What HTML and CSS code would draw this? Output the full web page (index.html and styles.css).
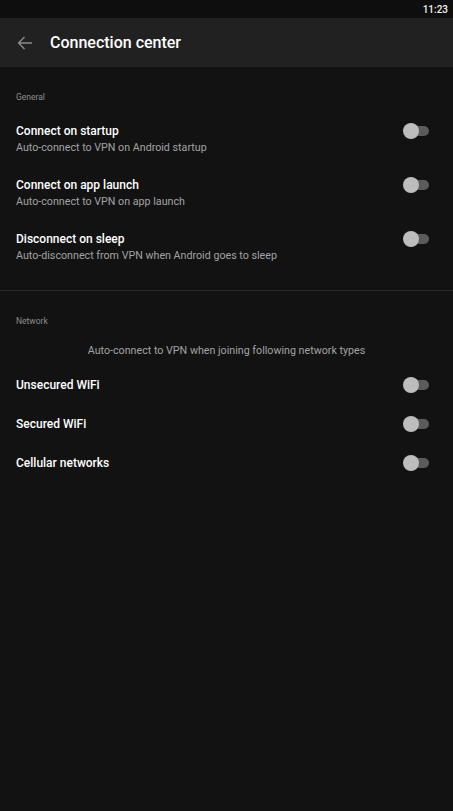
FILE: index.html
```html
<!DOCTYPE html>
<html lang="en">
<head>
  <meta charset="UTF-8" />
  <meta name="viewport" content="width=device-width, initial-scale=1" />
  <title>Connection center</title>
  <link rel="stylesheet" href="styles.css">
</head>
<body>

  <div class="status-bar">
    <span class="clock">11:23</span>
  </div>

  <header class="toolbar">
    <svg class="back" width="16" height="16" viewBox="0 0 16 16">
      <path d="M15 8H1.5M7.5 2L1.5 8l6 6" fill="none" stroke="#8a8a8a" stroke-width="1.4"/>
    </svg>
    <h1>Connection center</h1>
  </header>

  <main>
    <section class="group group-general">
      <h2 class="group-title">General</h2>

      <div class="row">
        <div class="row-text">
          <div class="row-title">Connect on startup</div>
          <div class="row-sub">Auto-connect to VPN on Android startup</div>
        </div>
        <span class="switch"></span>
      </div>

      <div class="row">
        <div class="row-text">
          <div class="row-title">Connect on app launch</div>
          <div class="row-sub">Auto-connect to VPN on app launch</div>
        </div>
        <span class="switch"></span>
      </div>

      <div class="row">
        <div class="row-text">
          <div class="row-title">Disconnect on sleep</div>
          <div class="row-sub">Auto-disconnect from VPN when Android goes to sleep</div>
        </div>
        <span class="switch"></span>
      </div>
    </section>

    <section class="group group-network">
      <h2 class="group-title">Network</h2>
      <p class="group-note">Auto-connect to VPN when joining following network types</p>

      <div class="row row-single">
        <div class="row-title">Unsecured WiFi</div>
        <span class="switch"></span>
      </div>
      <div class="row row-single">
        <div class="row-title">Secured WiFi</div>
        <span class="switch"></span>
      </div>
      <div class="row row-single">
        <div class="row-title">Cellular networks</div>
        <span class="switch"></span>
      </div>
    </section>
  </main>

</body>
</html>
```

FILE: styles.css
```css
:root {
  --bg: #121212;
  --status: #0e0e0e;
  --toolbar: #212121;
  --text: #ffffff;
  --muted: #a3a3a3;
  --label: #8e8e8e;
  --divider: #2c2c2c;
  --track: #5b5b5b;
  --thumb: #bdbdbd;
}

* {
  box-sizing: border-box;
}

body {
  margin: 0;
  min-height: 100vh;
  background: var(--bg);
  color: var(--text);
  font-family: Roboto, "Noto Sans", sans-serif;
}

.status-bar {
  height: 18px;
  background: var(--status);
  display: flex;
  align-items: center;
  justify-content: flex-end;
  padding: 0 5px;
}

.clock {
  font-size: 10px;
  font-weight: 500;
  color: #f0f0f0;
}

.toolbar {
  height: 49px;
  background: var(--toolbar);
  display: flex;
  align-items: center;
  padding: 0 17px;
}

.back {
  display: block;
  margin-right: 17px;
}

.toolbar h1 {
  margin: 0;
  font-size: 16px;
  font-weight: 500;
}

.group-general {
  padding: 25px 0 17px;
  border-bottom: 1px solid var(--divider);
}

.group-network {
  padding-top: 25px;
}

.group-title {
  margin: 0 16px 9px;
  font-size: 8.5px;
  font-weight: 400;
  color: var(--label);
}

.group-note {
  margin: 18px 0 8px;
  text-align: center;
  font-size: 10.7px;
  color: var(--muted);
}

.row {
  display: flex;
  align-items: center;
  justify-content: space-between;
  padding: 0 24px 0 16px;
  height: 54px;
}

.row-single {
  height: 39px;
}

.row-text {
  padding-top: 2px;
}

.row-text + .switch {
  margin-bottom: 14px;
}

.row-title {
  font-size: 12px;
  font-weight: 500;
  line-height: 16px;
}

.row-sub {
  font-size: 10.7px;
  line-height: 14px;
  color: var(--muted);
  margin-top: 2px;
}

.switch {
  position: relative;
  width: 25px;
  height: 10px;
  border-radius: 5px;
  background: var(--track);
  flex-shrink: 0;
}

.switch::before {
  content: "";
  position: absolute;
  left: -1px;
  top: -3px;
  width: 16px;
  height: 16px;
  border-radius: 50%;
  background: var(--thumb);
}
```
